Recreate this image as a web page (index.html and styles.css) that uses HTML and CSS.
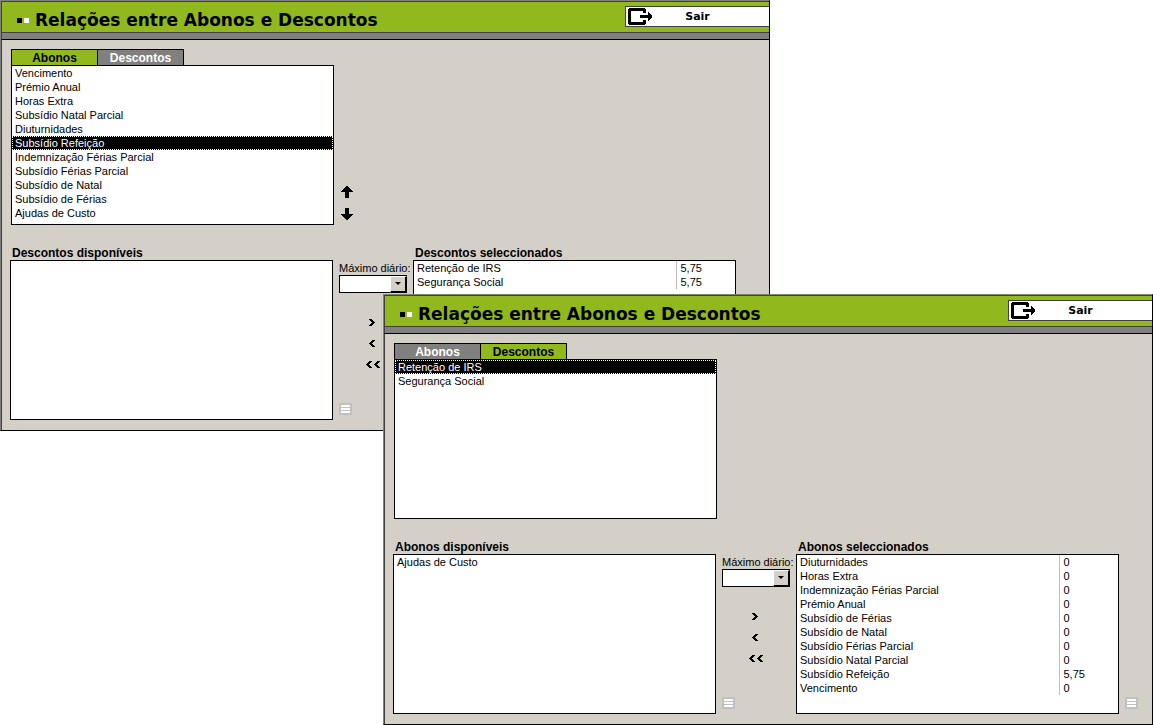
FILE: index.html
```html
<!DOCTYPE html>
<html lang="pt">
<head>
<meta charset="utf-8">
<title>Relações entre Abonos e Descontos</title>
<link rel="stylesheet" href="styles.css">
</head>
<body>
<svg class="sprites" aria-hidden="true">
  <symbol id="exit" viewBox="0 0 24 17"><path d="M1 0H17V1H18V5H15V3H3V14H15V12H18V16H17V17H1V16H0V1H1Z"/><path d="M12 7H20V4H21V5H22V6H23V7H24V10H23V11H22V12H21V13H20V10H12Z"/></symbol>
  <symbol id="up" viewBox="0 0 12 12"><path d="M5 0H7V1H8V2H9V3H10V4H11V5H12V6H8V12H4V6H0V5H1V4H2V3H3V2H4V1H5Z"/></symbol>
  <symbol id="down" viewBox="0 0 12 12"><path d="M5 12H7V11H8V10H9V9H10V8H11V7H12V6H8V0H4V6H0V7H1V8H2V9H3V10H4V11H5Z"/></symbol>
  <symbol id="right" viewBox="0 0 6 7"><path d="M0 0H3V1H4V2H5V3H6V4H5V5H4V6H3V7H0V6H1V5H2V4H3V3H2V2H1V1H0Z"/></symbol>
  <symbol id="left" viewBox="0 0 6 7"><path d="M6 0H3V1H2V2H1V3H0V4H1V5H2V6H3V7H6V6H5V5H4V4H3V3H4V2H5V1H6Z"/></symbol>
  <symbol id="lines" viewBox="0 0 13 12"><path fill="#c0c0c0" d="M0 0H13V12H0Z"/><path fill="#fff" d="M2 2H11V4H2ZM2 5H11V7H2ZM2 8H11V10H2Z"/></symbol>
</svg>

<main class="desktop">
  <section class="window window-back">
    <header class="titlebar">
      <span class="mark mark-dark"></span><span class="mark"></span>
      <h1 class="title">Relações entre Abonos e Descontos</h1>
      <button class="exit"><svg class="exit-icon"><use href="#exit"/></svg><span class="exit-label">Sair</span></button>
    </header>
    <div class="strip"></div>
    <div class="content">
      <div class="tabs" role="tablist">
        <button class="tab tab-active" role="tab" aria-selected="true">Abonos</button>
        <button class="tab" role="tab" aria-selected="false">Descontos</button>
      </div>
      <div class="top-row">
        <ul class="list" role="listbox" aria-label="Abonos">
          <li class="item" role="option">Vencimento</li>
          <li class="item" role="option">Prémio Anual</li>
          <li class="item" role="option">Horas Extra</li>
          <li class="item" role="option">Subsídio Natal Parcial</li>
          <li class="item" role="option">Diuturnidades</li>
          <li class="item item-selected" role="option" aria-selected="true">Subsídio Refeição</li>
          <li class="item" role="option">Indemnização Férias Parcial</li>
          <li class="item" role="option">Subsídio Férias Parcial</li>
          <li class="item" role="option">Subsídio de Natal</li>
          <li class="item" role="option">Subsídio de Férias</li>
          <li class="item" role="option">Ajudas de Custo</li>
        </ul>
        <div class="order">
          <button class="plain" aria-label="Subir"><svg class="arrow"><use href="#up"/></svg></button>
          <button class="plain" aria-label="Descer"><svg class="arrow"><use href="#down"/></svg></button>
        </div>
      </div>
      <div class="bottom-row">
        <div class="panel">
          <h2 class="caption">Descontos disponíveis</h2>
          <ul class="list" role="listbox" aria-label="Descontos disponíveis"></ul>
        </div>
        <div class="middle">
          <label class="max-label" for="max-a">Máximo diário:</label>
          <span class="combo"><select class="combo-field" id="max-a"><option></option></select><span class="combo-button"></span></span>
          <div class="moves">
            <button class="plain move move-one" aria-label="Adicionar"><svg class="chevron"><use href="#right"/></svg></button>
            <button class="plain move move-one" aria-label="Remover"><svg class="chevron"><use href="#left"/></svg></button>
            <button class="plain move" aria-label="Remover todos"><svg class="chevron"><use href="#left"/></svg><svg class="chevron"><use href="#left"/></svg></button>
          </div>
          <button class="plain details" aria-label="Detalhes"><svg class="lines"><use href="#lines"/></svg></button>
        </div>
        <div class="panel">
          <h2 class="caption">Descontos seleccionados</h2>
          <div class="list">
            <table class="grid">
              <tr><td class="cell">Retenção de IRS</td><td class="cell value">5,75</td></tr>
              <tr><td class="cell">Segurança Social</td><td class="cell value">5,75</td></tr>
            </table>
          </div>
        </div>
        <div class="side"><button class="plain details" aria-label="Detalhes"><svg class="lines"><use href="#lines"/></svg></button></div>
      </div>
    </div>
  </section>

  <section class="window window-front">
    <header class="titlebar">
      <span class="mark mark-dark"></span><span class="mark"></span>
      <h1 class="title">Relações entre Abonos e Descontos</h1>
      <button class="exit"><svg class="exit-icon"><use href="#exit"/></svg><span class="exit-label">Sair</span></button>
    </header>
    <div class="strip"></div>
    <div class="content">
      <div class="tabs" role="tablist">
        <button class="tab" role="tab" aria-selected="false">Abonos</button>
        <button class="tab tab-active" role="tab" aria-selected="true">Descontos</button>
      </div>
      <div class="top-row">
        <ul class="list" role="listbox" aria-label="Descontos">
          <li class="item item-selected" role="option" aria-selected="true">Retenção de IRS</li>
          <li class="item" role="option">Segurança Social</li>
        </ul>
      </div>
      <div class="bottom-row">
        <div class="panel">
          <h2 class="caption">Abonos disponíveis</h2>
          <ul class="list" role="listbox" aria-label="Abonos disponíveis">
            <li class="item" role="option">Ajudas de Custo</li>
          </ul>
        </div>
        <div class="middle">
          <label class="max-label" for="max-b">Máximo diário:</label>
          <span class="combo"><select class="combo-field" id="max-b"><option></option></select><span class="combo-button"></span></span>
          <div class="moves">
            <button class="plain move move-one" aria-label="Adicionar"><svg class="chevron"><use href="#right"/></svg></button>
            <button class="plain move move-one" aria-label="Remover"><svg class="chevron"><use href="#left"/></svg></button>
            <button class="plain move" aria-label="Remover todos"><svg class="chevron"><use href="#left"/></svg><svg class="chevron"><use href="#left"/></svg></button>
          </div>
          <button class="plain details" aria-label="Detalhes"><svg class="lines"><use href="#lines"/></svg></button>
        </div>
        <div class="panel">
          <h2 class="caption">Abonos seleccionados</h2>
          <div class="list">
            <table class="grid">
              <tr><td class="cell">Diuturnidades</td><td class="cell value">0</td></tr>
              <tr><td class="cell">Horas Extra</td><td class="cell value">0</td></tr>
              <tr><td class="cell">Indemnização Férias Parcial</td><td class="cell value">0</td></tr>
              <tr><td class="cell">Prémio Anual</td><td class="cell value">0</td></tr>
              <tr><td class="cell">Subsídio de Férias</td><td class="cell value">0</td></tr>
              <tr><td class="cell">Subsídio de Natal</td><td class="cell value">0</td></tr>
              <tr><td class="cell">Subsídio Férias Parcial</td><td class="cell value">0</td></tr>
              <tr><td class="cell">Subsídio Natal Parcial</td><td class="cell value">0</td></tr>
              <tr><td class="cell">Subsídio Refeição</td><td class="cell value">5,75</td></tr>
              <tr><td class="cell">Vencimento</td><td class="cell value">0</td></tr>
            </table>
          </div>
        </div>
        <div class="side"><button class="plain details" aria-label="Detalhes"><svg class="lines"><use href="#lines"/></svg></button></div>
      </div>
    </div>
  </section>
</main>
</body>
</html>
```
FILE: styles.css
```css
* { box-sizing: border-box; }

body {
  margin: 0;
  background: #fff;
  color: #000;
  font: 11px/14px "Liberation Sans", Arial, sans-serif;
}

svg { display: block; shape-rendering: crispEdges; }
button { font: inherit; color: inherit; cursor: pointer; }
.sprites { position: absolute; width: 0; height: 0; }

/* Overlapping windows */
.desktop { position: relative; min-height: 100vh; }
.window {
  position: absolute;
  background: #d4d0c8;
  border: 1px solid #000;
  border-top-color: #808080;
  border-left-color: #808080;
}
.window-back { top: 0; left: 0; right: 383px; }
.window-front { top: 294px; left: 383px; right: 0; }

.titlebar {
  display: flex;
  align-items: flex-start;
  height: 32px;
  padding-left: 15px;
  background: #91b81c;
  border: 1px solid #404040;
  border-right: 0;
}
.mark { width: 5px; height: 5px; margin: 16px 2px 0 0; background: #fff; }
.mark-dark { background: #000; }
.title {
  flex: 1;
  margin: 8px 0 0 4px;
  font: bold 17px/20px "DejaVu Sans", Verdana, sans-serif;
  white-space: nowrap;
}
.exit {
  display: flex;
  align-items: center;
  width: 144px;
  height: 21px;
  margin-top: 4px;
  padding: 0 0 0 2px;
  background: #fff;
  border: 1px solid #404040;
  border-right: 0;
}
.exit-icon { width: 24px; height: 17px; }
.exit-label {
  flex: 1;
  padding-right: 26px;
  font: bold 11px/14px "DejaVu Sans", Verdana, sans-serif;
}
.strip {
  height: 7px;
  background: #808080;
  border-left: 1px solid #404040;
  border-bottom: 1px solid #000;
}

.content { padding: 9px 0 10px; border-left: 1px solid #404040; }

.tabs { display: flex; padding-left: 9px; }
.tab {
  width: 87px;
  height: 16px;
  padding: 1px 0 0;
  background: #808080;
  border: 1px solid #000;
  border-bottom: 0;
  color: #fff;
  font: bold 12px/14px "Liberation Sans", Arial, sans-serif;
}
.tab + .tab { border-left: 0; width: 86px; }
.tab-active { background: #91b81c; color: #000; }

.top-row {
  display: grid;
  grid-template-columns: 1fr 80px 1fr;
  padding: 0 32px 0 9px;
}
.list {
  min-height: 160px;
  margin: 0;
  padding: 0 0 4px;
  background: #fff;
  border: 1px solid #000;
  list-style: none;
}
.item { padding-left: 3px; height: 14px; white-space: nowrap; }
.item-selected {
  background: #000;
  color: #fff;
  outline: 1px dotted #fff;
  outline-offset: -1px;
}

.plain { display: flex; padding: 0; background: none; border: 0; }
.order {
  display: flex;
  flex-direction: column;
  justify-content: flex-end;
  gap: 10px;
  padding: 0 0 5px 7px;
}
.arrow { width: 12px; height: 12px; }

.bottom-row {
  display: grid;
  grid-template-columns: 1fr 80px 1fr 33px;
  margin-top: 21px;
  padding-left: 8px;
}
.caption {
  margin: 0;
  padding-left: 2px;
  font: bold 12px/14px "Liberation Sans", Arial, sans-serif;
  white-space: nowrap;
}
.middle, .side { display: flex; flex-direction: column; padding: 0 6px 5px; }
.middle { padding-top: 15px; }
.max-label { white-space: nowrap; }
.combo { position: relative; display: flex; width: 68px; height: 18px; }
.combo-field {
  appearance: none;
  width: 100%;
  margin: 0;
  padding: 0 18px 0 3px;
  background: #fff;
  border: 1px solid #000;
  border-radius: 0;
  font: inherit;
}
.combo-button {
  position: absolute;
  top: 1px;
  right: 0;
  bottom: 0;
  width: 17px;
  background: #d4d0c8;
  border: solid #000;
  border-width: 1px 2px 2px 1px;
  border-top-color: #fff;
  border-left-color: #fff;
  pointer-events: none;
}
.combo-button::after {
  content: "";
  position: absolute;
  top: 5px;
  left: 4px;
  border: 3px solid transparent;
  border-top-color: #000;
  border-bottom: 0;
}
.moves { display: flex; flex-direction: column; gap: 14px; padding: 26px 0 0 27px; }
.move { gap: 2px; }
.move-one { padding-left: 3px; }
.chevron { width: 6px; height: 7px; }
.details { margin-top: auto; width: 13px; }
.lines { width: 13px; height: 12px; }

.grid { width: 100%; border-collapse: collapse; table-layout: fixed; }
.cell { height: 14px; padding: 0 0 0 3px; white-space: nowrap; }
.value { width: 59px; padding-left: 4px; border-left: 1px solid #c0c0c0; }
```
